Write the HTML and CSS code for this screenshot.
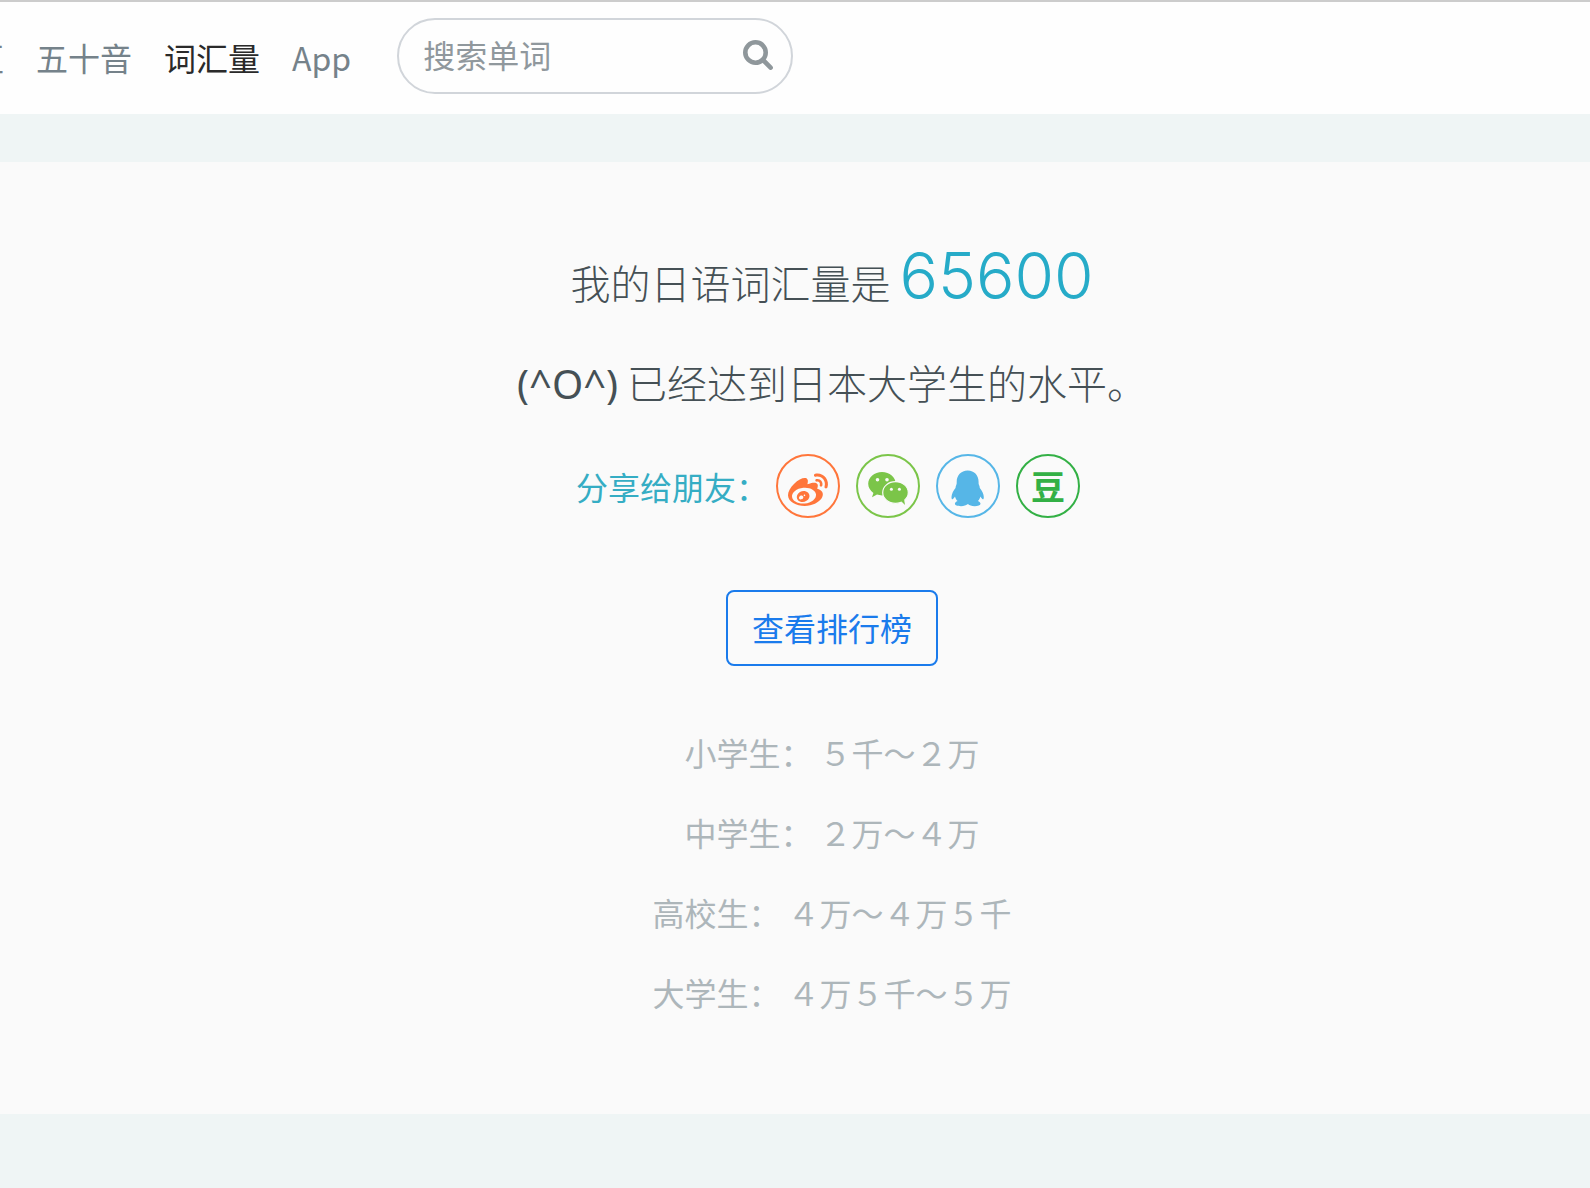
FILE: index.html
```html
<!DOCTYPE html>
<html lang="zh-CN">

<head>
    <meta charset="UTF-8">
    <meta name="viewport" content="width=device-width, initial-scale=1">
    <title>词汇量</title>
    <link rel="stylesheet" href="styles.css">
</head>

<body>
    <header class="header">
        <ul class="nav">
            <li><a href="#">社区</a></li>
            <li><a href="#">五十音</a></li>
            <li><a href="#" class="cur">词汇量</a></li>
            <li><a href="#">App</a></li>
        </ul>
        <form class="search">
            <input type="text" placeholder="搜索单词" aria-label="搜索单词">
            <button type="submit" aria-label="搜索">
                <svg viewBox="0 0 30 30" width="30" height="30">
                    <circle cx="12.5" cy="12.5" r="10.2" />
                    <path d="M20 20l7.6 7.6" />
                </svg>
            </button>
        </form>
    </header>

    <main class="result">
        <h1 class="score">我的日语词汇量是 <span>65600</span></h1>
        <p class="level"><span>(^O^)</span> 已经达到日本大学生的水平。</p>
        <div class="share">
            <span class="share-title">分享给朋友：</span>
            <a href="#" class="icon weibo" aria-label="微博">
                <svg viewBox="-128 -192 768 768">
                    <path d="M407 177.6c7.6-24-13.4-46.8-37.4-41.7-22 4.8-28.8-28.1-7.1-32.8 50.1-10.9 92.3 37.1 76.5 84.8-6.8 21.2-38.8 10.8-32-10.3zM214.8 446.7C108.5 446.7 0 395.3 0 310.4c0-44.3 28-95.4 76.3-143.7C176 67 279.5 65.8 249.9 161c-4 13.1 12.3 5.7 12.3 6 79.5-33.6 140.5-16.8 114 51.4-3.7 9.4 1.1 10.9 8.3 13.1 135.7 42.3 34.8 215.2-169.7 215.2zm143.7-146.3c-5.4-55.7-78.5-94-163.4-85.7-84.8 8.6-148.8 60.3-143.4 116s78.5 94 163.4 85.7c84.8-8.6 148.8-60.3 143.4-116zM347.9 35.1c-25.9 5.6-16.8 43.7 8.3 38.3 72.3-15.2 134.8 52.8 111.7 124-7.4 24.2 29.1 37 37.4 12 31.9-99.8-55.1-195.9-157.4-174.3zm-78.5 311c-17.1 38.8-66.8 60-109.1 46.3-40.8-13.1-58-53.4-40.3-89.7 17.7-35.4 63.1-55.4 103.4-45.1 42 10.8 63.1 50.2 46 88.5zm-86.3-30c-12.9-5.4-30 .3-38 12.9-8.3 12.9-4.3 28 8.6 34 13.1 6 30.8.3 39.1-12.9 8-13.1 3.7-28.3-9.7-34zm32.6-13.4c-5.1-1.7-11.4.6-14.3 5.4-2.9 5.1-1.4 10.6 3.7 12.9 5.1 2 11.7-.3 14.6-5.4 2.8-5.2 1.1-10.9-4-12.9z" />
                </svg>
            </a>
            <a href="#" class="icon wechat" aria-label="微信">
                <svg viewBox="2 2 60 60">
                    <path d="M26 18c-7.600 0-13.800 5.200-13.800 11.800 0 3.700 2 6.900 5.200 9.100l-1.400 4.300 5-2.600c1.600.5 3.300.8 5 .8 7.600 0 13.800-5.100 13.800-11.600S33.600 18 26 18z" />
                    <ellipse class="edge" cx="39.500" cy="38.500" rx="12.800" ry="10.800" />
                    <path d="M45 47l4 4-1-6z" />
                    <g class="eye">
                        <circle cx="21.500" cy="25.700" r="1.800" />
                        <circle cx="31" cy="25.700" r="1.800" />
                        <circle cx="35.400" cy="35.300" r="1.500" />
                        <circle cx="43.400" cy="35.300" r="1.500" />
                    </g>
                </svg>
            </a>
            <a href="#" class="icon qq" aria-label="QQ">
                <svg viewBox="2 2 60 60">
                    <path d="M31.700 16.600c-6.800 0-11 5-11 11.400 0 1.200.1 1.700-.4 2.900-.6 1.200-.6 2-.8 3.100-2 2.600-4 6-4 8.900 0 1.700.4 2.700 1.100 2.300.8-.4 1.900-1.700 2.400-2.700.4 1.900 1.300 3.400 2.600 4.600-1.700.7-2.700 1.600-2.700 2.700 0 1.500 2.600 2.400 6.100 2.400 3 0 5.300-.8 6.300-1.900h1c1 1.100 3.300 1.900 6.300 1.900 3.400 0 5.900-.9 5.900-2.400 0-1.100-1-2-2.700-2.700 1.300-1.200 2.200-2.700 2.600-4.600.5 1 1.500 2.300 2.300 2.700.7.4 1.100-.6 1.100-2.300 0-2.900-2-6.300-4-8.900-.1-1.100-.2-1.900-.8-3.100-.5-1.200-.4-1.700-.4-2.900 0-6.400-4.100-11.400-10.900-11.400z" />
                </svg>
            </a>
            <a href="#" class="icon douban">豆</a>
        </div>
        <button type="button" class="rank-btn">查看排行榜</button>
        <ul class="grades">
            <li>小学生： ５千～２万</li>
            <li>中学生： ２万～４万</li>
            <li>高校生： ４万～４万５千</li>
            <li>大学生： ４万５千～５万</li>
        </ul>
    </main>
</body>

</html>
```
FILE: styles.css
```css
body,
p,
ul,
h1 {
    margin: 0;
    padding: 0;
}

ul {
    list-style: none;
}

a {
    text-decoration: none;
}

* {
    box-sizing: border-box;
}

body {
    background: #eff5f5;
    color: #455055;
    font-family: "Noto Sans CJK SC", sans-serif;
    font-size: 32px;
    line-height: 48px;
    overflow-x: hidden;
}

input,
button {
    font: inherit;
}

.header {
    display: flex;
    align-items: flex-start;
    padding: 16px 0 20px;
    border-top: 2px solid #ccc;
    background: #fefefe;
}

/* the first item runs off the left edge */
.nav {
    display: flex;
    gap: 32px;
    margin-left: -60px;
    padding-top: 15px;
}

.nav li {
    white-space: nowrap;
}

.nav a {
    color: #75828a;
}

.nav a.cur {
    color: #2a2a2a;
}

.search {
    display: flex;
    align-items: center;
    width: 396px;
    height: 76px;
    margin-left: 46px;
    padding: 0 18px 2px 24px;
    border: 2px solid #d1d5da;
    border-radius: 38px;
}

.search input {
    flex: 1;
    min-width: 0;
    height: 48px;
    padding: 0 0 2px;
    border: none;
    outline: none;
    background: none;
}

.search input::placeholder {
    color: #90989d;
    opacity: 1;
}

.search button {
    padding: 0;
    border: none;
    background: none;
    cursor: pointer;
}

.search svg {
    display: block;
    fill: none;
    stroke: #8f979b;
    stroke-width: 4.6;
    stroke-linecap: round;
}

.result {
    display: flex;
    flex-direction: column;
    align-items: center;
    margin-top: 48px;
    padding: 74px 0 64px 74px;
    background: #fafafa;
}

.score,
.level {
    font-size: 40px;
    font-weight: 300;
}

.score {
    line-height: 80px;
}

.score span {
    color: #26abc8;
    font-family: Inter, sans-serif;
    font-size: 64px;
}

.level {
    margin-top: 28px;
    line-height: 64px;
}

.level span {
    font-family: "Noto Sans", sans-serif;
    font-weight: 400;
}

.share {
    display: flex;
    align-items: center;
    margin-top: 38px;
}

.share-title {
    color: #35adc4;
}

.icon {
    width: 64px;
    height: 64px;
    margin: 0 8px;
    border: 2px solid;
    border-radius: 50%;
    text-align: center;
}

.icon svg {
    display: block;
    fill: currentColor;
}

.weibo {
    color: #ff763b;
}

.wechat {
    color: #7bc549;
}

.wechat .edge {
    stroke: #fafafa;
    stroke-width: 1.2;
}

.wechat .eye {
    fill: #fafafa;
}

.qq {
    color: #56b6e7;
}

.douban {
    color: #33b045;
    font-size: 34px;
    font-weight: 700;
    line-height: 60px;
}

.rank-btn {
    height: 76px;
    margin-top: 72px;
    padding: 0 24px 2px;
    border: 2px solid #1a7bec;
    border-radius: 8px;
    background: none;
    color: #1a7bec;
    cursor: pointer;
}

.grades {
    margin-top: 62px;
    padding-bottom: 2px;
    color: #adb6ba;
    text-align: center;
}

.grades li {
    margin-bottom: 32px;
}
```
